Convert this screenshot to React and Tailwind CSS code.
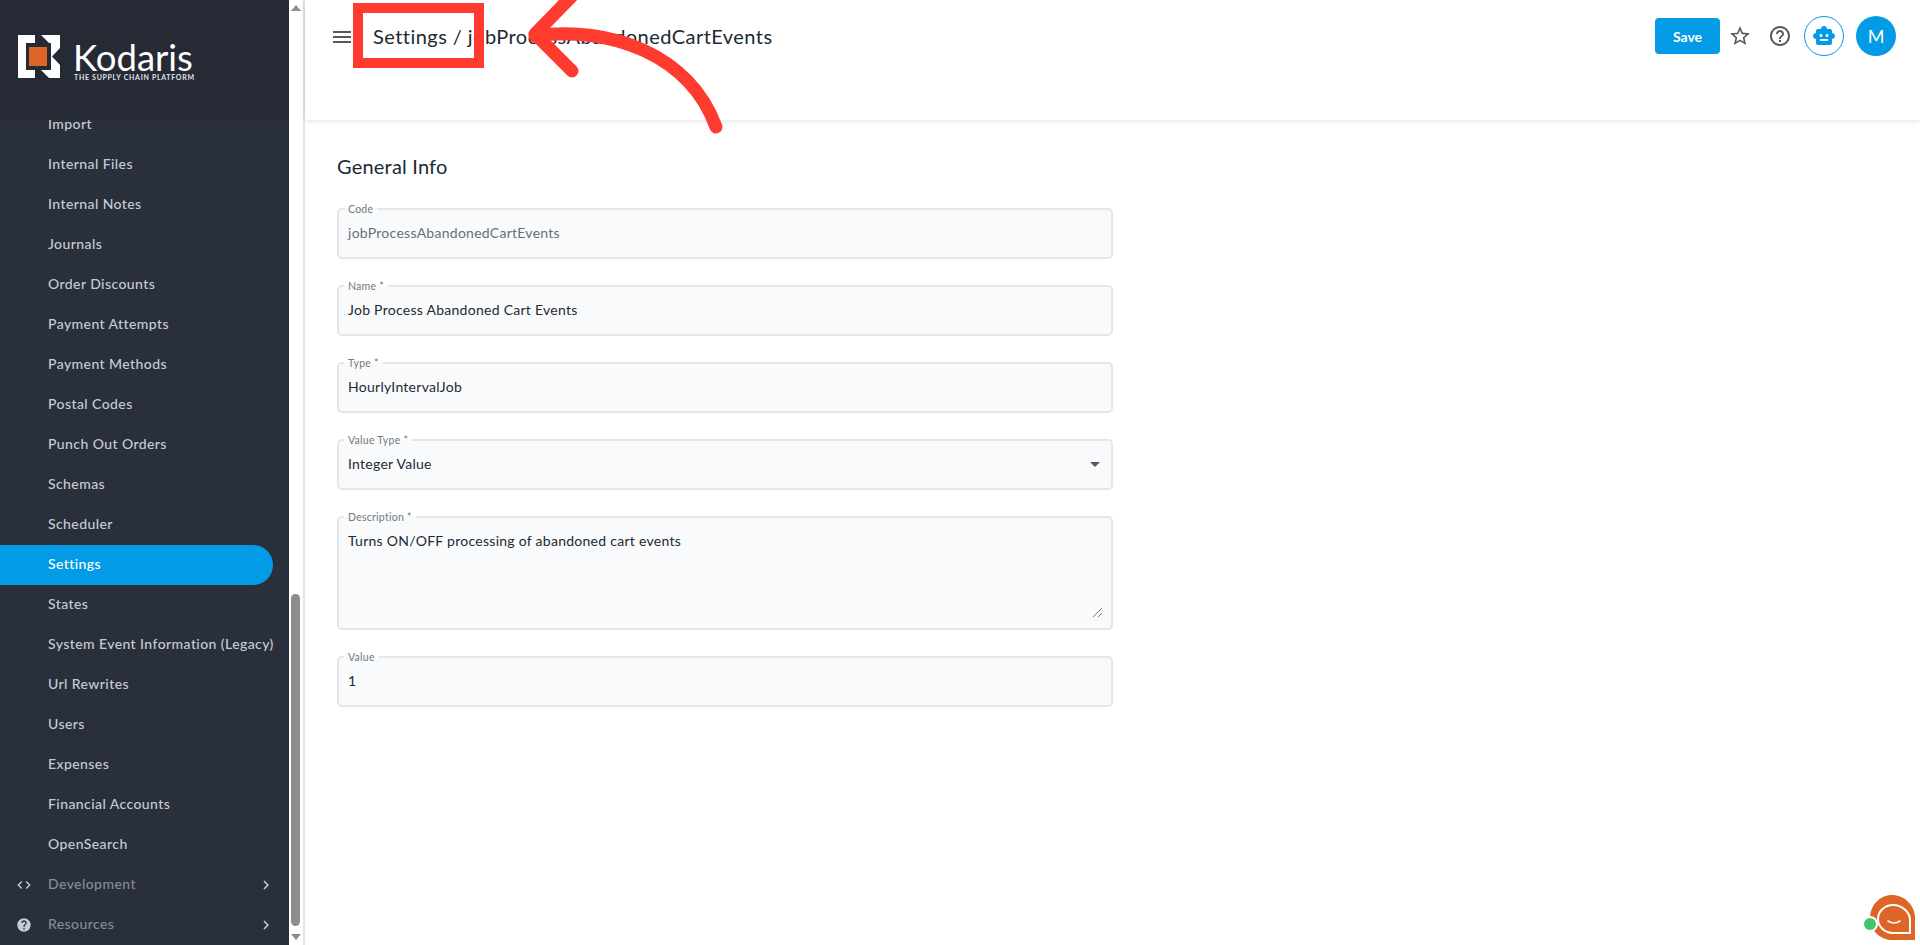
import { MdMenu, MdStarBorder, MdHelpOutline, MdSmartToy, MdCode, MdHelp, MdChevronRight, MdArrowDropDown } from 'react-icons/md'

const NAV = [
  'Import', 'Internal Files', 'Internal Notes', 'Journals', 'Order Discounts', 'Payment Attempts',
  'Payment Methods', 'Postal Codes', 'Punch Out Orders', 'Schemas', 'Scheduler', 'Settings', 'States',
  'System Event Information (Legacy)', 'Url Rewrites', 'Users', 'Expenses', 'Financial Accounts', 'OpenSearch',
]

function Logo() {
  return (
    <div className="flex items-start gap-[12px] pl-[18px] pt-[35px]">
      <svg width="43" height="43" viewBox="0 0 43 43" className="shrink-0">
        <path d="M0 0H17V8H8V35H17V43H0Z" fill="#fff" />
        <path d="M23 0H42V13L34 21.5L42 30V43H31L23 35H33V8H31Z" fill="#fff" />
        <rect x="11" y="12" width="18" height="19" fill="#dd6526" />
      </svg>
      <div className="text-white">
        <div className="text-[36.5px] leading-[30px] mt-[7px]">Kodaris</div>
        <div className="text-[7px] leading-[8px] mt-[1px] ml-[1px] font-bold tracking-[0.7px] whitespace-nowrap text-[#dfe1e4]">THE SUPPLY CHAIN PLATFORM</div>
      </div>
    </div>
  )
}

function NavRow({ label }) {
  const active = label === 'Settings'
  return (
    <div className={`h-[40px] w-[273px] flex items-center pl-[48px] pb-[4px] text-[14px] tracking-[0.42px] font-medium whitespace-nowrap ${active ? 'bg-[#039be5] text-white rounded-r-[20px] font-bold' : 'text-[#c6ccd4]'}`}>
      {label}
    </div>
  )
}

function GroupRow({ icon, label }) {
  return (
    <div className="h-[40px] w-[273px] flex items-center text-[14px] tracking-[0.42px] font-medium text-[#868b92]">
      <span className="w-[48px] pl-[16px] text-[#c6ccd4]">{icon}</span>
      <span className="flex-1 pb-[4px]">{label}</span>
      <MdChevronRight size={18} className="text-[#c6ccd4] mr-[-2px]" />
    </div>
  )
}

function Sidebar() {
  return (
    <aside className="w-[289px] h-full shrink-0 bg-[#2a303b] flex flex-col overflow-hidden">
      <div className="h-[120px] shrink-0 bg-[#252a35] relative z-10">
        <Logo />
      </div>
      <div className="mt-[-15px]">
        {NAV.map(n => <NavRow key={n} label={n} />)}
        <GroupRow icon={<MdCode size={16} />} label="Development" />
        <GroupRow icon={<MdHelp size={16} />} label="Resources" />
      </div>
    </aside>
  )
}

function Scrollbar() {
  return (
    <div className="w-[16px] h-full shrink-0 bg-white border-r-2 border-[#e4e4e4] flex flex-col items-center pr-[1px]">
      <svg width="10" height="6" viewBox="0 0 10 6" className="mt-[5px] shrink-0"><path d="M5 0L10 6H0Z" fill="#8d8d8d" /></svg>
      <div className="flex-1" />
      <div className="w-[9px] h-[332px] bg-[#8d8d8d] rounded-[5px] shrink-0" />
      <svg width="10" height="6" viewBox="0 0 10 6" className="mt-[8px] mb-[5px] shrink-0"><path d="M0 0H10L5 6Z" fill="#8d8d8d" /></svg>
    </div>
  )
}

function Field({ label, h = 'h-[55px]', children, muted }) {
  return (
    <fieldset className={`${h} w-[776px] rounded-[5px] border-2 border-[#e6e6e8] bg-[#f9fafc] px-[9px]`}>
      <legend className="ml-[-4px] px-[4px] text-[10.5px] tracking-[0.25px] leading-[10px] text-[#727a80]">{label}</legend>
      <div className={`text-[14px] tracking-[0.27px] leading-[20px] mt-[9px] ${muted ? 'text-[#65707a]' : 'text-[#1c2a33]'}`}>{children}</div>
    </fieldset>
  )
}

function Topbar() {
  return (
    <header className="h-[120px] shrink-0 bg-white shadow-[0_1px_6px_rgba(0,0,0,0.12)] flex items-start pl-[25px] pr-[24px] pt-[16px]">
      <MdMenu size={24} className="text-[#555a60] mt-[9px]" />
      <div className="ml-[19px] mt-[8px] text-[20px] tracking-[0.45px] leading-[24px] text-[#1c2a33] flex-1">Settings / jobProcessAbandonedCartEvents</div>
      <button className="w-[65px] h-[36px] mt-[2px] rounded-[4px] bg-[#039be5] text-white text-[14px] font-bold">Save</button>
      <MdStarBorder size={24} className="text-[#555a60] ml-[8px] mt-[8px]" />
      <MdHelpOutline size={24} className="text-[#555a60] ml-[16px] mt-[8px]" />
      <div className="w-[40px] h-[40px] ml-[12px] rounded-full border border-[#039be5] flex items-center justify-center">
        <MdSmartToy size={24} className="text-[#039be5]" />
      </div>
      <div className="w-[40px] h-[40px] ml-[12px] rounded-full bg-[#039be5] text-white text-[18px] flex items-center justify-center">M</div>
    </header>
  )
}

function Form() {
  return (
    <div className="pl-[32px] pt-[34px]">
      <h2 className="text-[20px] tracking-[0.2px] leading-[24px] text-[#1c2a33] mb-[26px]">General Info</h2>
      <div className="flex flex-col gap-[22px]">
        <Field label="Code" muted>jobProcessAbandonedCartEvents</Field>
        <Field label="Name *">Job Process Abandoned Cart Events</Field>
        <Field label="Type *">HourlyIntervalJob</Field>
        <Field label="Value Type *">
          <div className="flex items-center justify-between">
            <span>Integer Value</span>
            <MdArrowDropDown size={24} className="text-[#555a60] mr-[-5px] my-[-2px]" />
          </div>
        </Field>
        <Field label="Description *" h="h-[118px]">
          <div className="h-[86px] flex flex-col justify-between">
            <span>Turns ON/OFF processing of abandoned cart events</span>
            <svg width="9" height="9" viewBox="0 0 9 9" className="self-end">
              <path d="M0 9L9 0M5 9L9 5" stroke="#777" strokeWidth="1" />
            </svg>
          </div>
        </Field>
        <Field label="Value">1</Field>
      </div>
    </div>
  )
}

function Annotation() {
  return (
    <svg width="1920" height="945" viewBox="0 0 1920 945" fill="none" className="absolute inset-0 pointer-events-none">
      <rect x="358" y="8" width="121" height="55" stroke="#ff3a2f" strokeWidth="10" />
      <path d="M716 127C690 55 610 25 535 36" stroke="#ff3a2f" strokeWidth="13" strokeLinecap="round" />
      <path d="M572 -4L535 34L572 71" stroke="#ff3a2f" strokeWidth="13" strokeLinecap="round" strokeLinejoin="round" />
    </svg>
  )
}

function ChatBadge() {
  return (
    <svg width="60" height="55" viewBox="0 0 60 55" className="absolute right-0 bottom-0">
      <path d="M32 5C44 5 55 15 55 28V50H32C20 50 10 40 10 28C10 15 20 5 32 5Z" fill="#dd6526" />
      <path d="M33 15C42 15 50 22 50 30V43H33C25 43 18 37 18 29C18 21 25 15 33 15Z" fill="#dd6526" stroke="#fff" strokeWidth="2" />
      <path d="M28 31Q34 35 40 31" stroke="#fff" strokeWidth="1.6" fill="none" strokeLinecap="round" />
      <circle cx="10" cy="34" r="8" fill="#fff" />
      <circle cx="10" cy="34" r="6" fill="#3fc869" />
    </svg>
  )
}

export default function App() {
  return (
    <div className="relative w-[1920px] h-[945px] overflow-hidden bg-white flex font-['Lato','Noto_Sans',sans-serif]">
      <Sidebar />
      <Scrollbar />
      <main className="flex-1 min-w-0 flex flex-col">
        <Topbar />
        <Form />
      </main>
      <Annotation />
      <ChatBadge />
    </div>
  )
}
